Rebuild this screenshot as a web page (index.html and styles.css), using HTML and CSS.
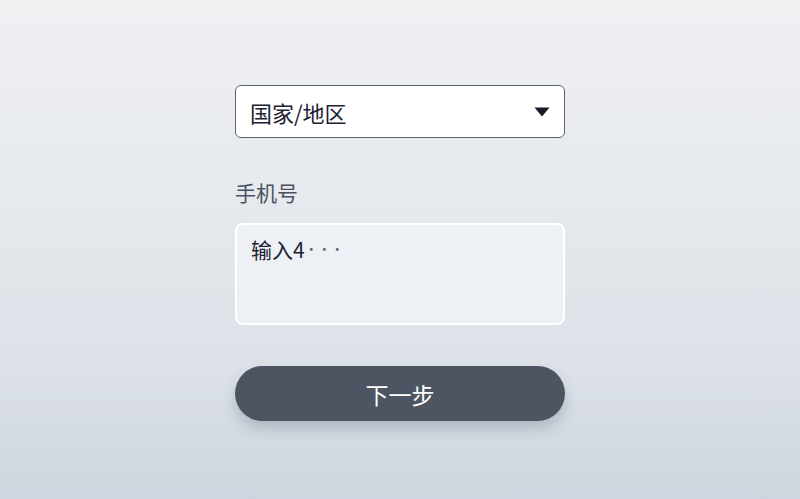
FILE: index.html
```html
<!DOCTYPE html>
<html lang="zh">
<head>
<meta charset="utf-8">
<link rel="stylesheet" href="styles.css">
</head>
<body>
<main class="form">
  <div class="select">
    <span class="select-text">国家/地区</span>
    <svg class="arrow" width="16" height="10" viewBox="0 0 16 10"><path d="M0.5 0.5 H15.5 L8 9.5 Z" fill="#151a26"/></svg>
  </div>
  <label class="label">手机号</label>
  <div class="input"><span class="input-text">输入4<span class="dots">···</span></span></div>
  <button class="btn">下一步</button>
</main>
</body>
</html>
```
FILE: styles.css
```css
html, body { margin: 0; padding: 0; }
body {
  width: 800px; height: 499px; overflow: hidden;
  background: linear-gradient(180deg, #eff0f2 0%, #e6e9ed 40%, #dce1e8 75%, #ced5de 100%);
  font-family: "Noto Sans CJK SC", "Noto Sans", sans-serif;
}
.form {
  width: 330px;
  margin: 85px auto 0;
  display: flex; flex-direction: column;
}
.select {
  box-sizing: border-box;
  height: 53px;
  border: 1.5px solid #5b6276;
  border-radius: 6px;
  background: #ffffff;
  display: flex; align-items: center; justify-content: space-between;
  padding: 0 14px 0 14px;
}
.select-text { font-size: 22px; color: #1c2133; line-height: 1; }
.arrow { display: block; }
.label {
  margin-top: 44px;
  font-size: 21px; color: #4b5163; line-height: 1;
}
.input {
  box-sizing: border-box;
  margin-top: 20px;
  height: 102px;
  border: 2px solid #ffffff;
  border-radius: 8px;
  background: #edf0f4;
  padding: 14px 14px;
}
.input-text { font-size: 21px; color: #1c2133; line-height: 1; }
.dots { color: #5a6070; font-size: 13px; letter-spacing: 0; vertical-align: 4px; }
.btn {
  margin-top: 41px;
  height: 55px;
  border: none;
  border-radius: 28px;
  background: #4d5563;
  color: #ffffff;
  font-family: "Noto Sans CJK SC", "Noto Sans", sans-serif;
  font-size: 23px;
  box-shadow: 0 8px 14px rgba(70, 80, 100, 0.25);
  padding: 0;
}
```
